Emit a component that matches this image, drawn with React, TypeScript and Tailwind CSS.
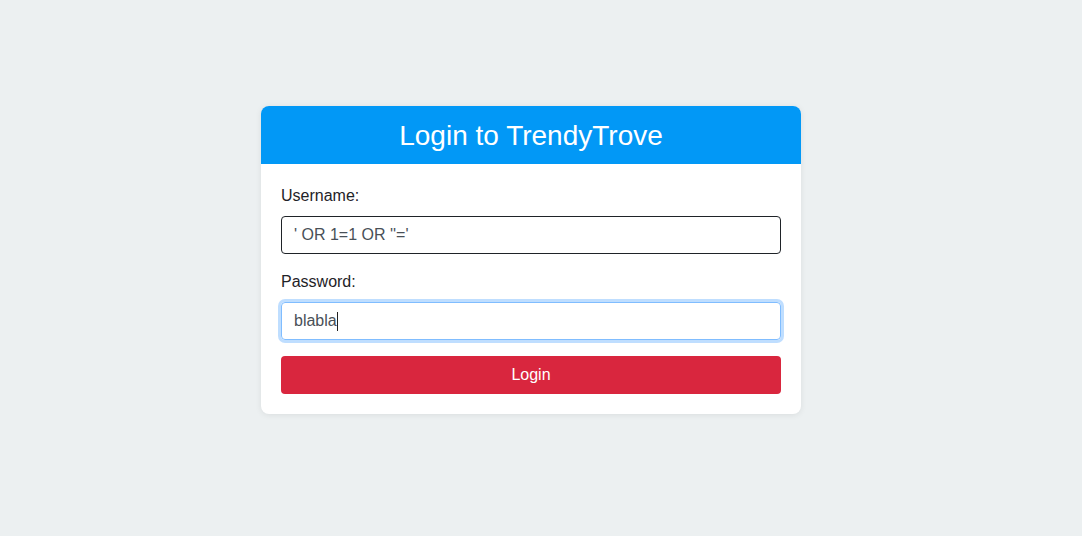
import { useEffect, useRef } from 'react';

export default function App() {
  const pwRef = useRef<HTMLInputElement>(null);

  useEffect(() => {
    pwRef.current?.focus();
  }, []);

  return (
    <div className="min-h-screen w-full bg-[#ecf0f1] flex justify-center pt-[106px] pr-5" style={{ fontFamily: '"Liberation Sans", Arial, sans-serif' }}>
      <div className="w-[540px] h-fit bg-white rounded-lg overflow-hidden shadow-[0_1px_6px_rgba(0,0,0,0.08)]">
        <div className="bg-[#0298f6] h-[58px] flex items-center justify-center pt-[2px]">
          <h1 className="text-[28px] text-white font-normal leading-none">Login to TrendyTrove</h1>
        </div>
        <form className="p-5 flex flex-col" onSubmit={(e) => e.preventDefault()}>
          <label className="text-base text-[#1f2328] leading-6 mb-2">Username:</label>
          <input
            type="text"
            defaultValue={`' OR 1=1 OR ''='`}
            className="h-[38px] w-full rounded border border-[#1f2328] px-3 text-base text-[#495057] outline-none mb-4"
          />
          <label className="text-base text-[#1f2328] leading-6 mb-2">Password:</label>
          <div className="relative mb-4">
            <input
              ref={pwRef}
              type="text"
              defaultValue="blabla"
              className="h-[38px] w-full rounded border border-[#80bdff] px-3 text-base text-[#495057] outline-none shadow-[0_0_0_3px_rgba(0,123,255,0.25)] caret-transparent"
            />
            {/* caret drawn so it shows in the still picture */}
            <span className="absolute left-[56px] top-[10px] h-[19px] w-px bg-[#222]" />
          </div>
          <button type="submit" className="h-[38px] w-full rounded bg-[#d9263e] text-white text-base">
            Login
          </button>
        </form>
      </div>
    </div>
  );
}
